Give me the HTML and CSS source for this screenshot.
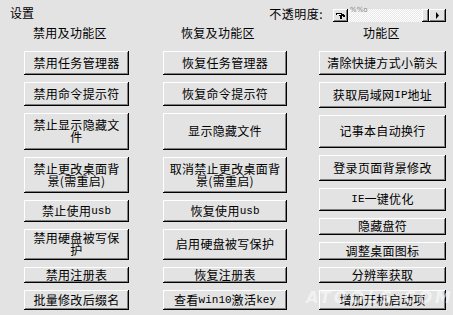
FILE: index.html
```html
<!DOCTYPE html>
<html lang="zh-CN">
<head>
<meta charset="utf-8">
<title>设置</title>
<link rel="stylesheet" href="styles.css">
</head>
<body>
<div class="window">
  <div class="top">
    <div class="title">设置</div>
    <div class="opacity">
      <span class="op-label">不透明度:</span>
      <div class="scrollbar">
        <div class="sb-btn sb-left">
          <svg width="11" height="9" viewBox="0 0 11 9"><path d="M1 2h6v1h2v1h1v2h-2v-1h-1v3h-2v-3h-1v-1h-3z" fill="#000"/><path d="M2 3h4v1h-4z" fill="#fff"/></svg>
        </div>
        <div class="sb-track"><span class="sb-noise">%%o</span></div>
        <div class="sb-thumb"></div>
        <div class="sb-btn sb-right">
          <svg width="5" height="7" viewBox="0 0 5 7"><path d="M1 0l3 3.5l-3 3.5z" fill="#000"/></svg>
        </div>
      </div>
    </div>
  </div>
  <div class="grid">
    <div class="head h1">禁用及功能区</div>
    <div class="head h2">恢复及功能区</div>
    <div class="head h3">功能区</div>

    <div class="col c1">
      <div class="btn">禁用任务管理器</div>
      <div class="btn">禁用命令提示符</div>
      <div class="btn">禁止显示隐藏文件</div>
      <div class="btn">禁止更改桌面背景(需重启)</div>
      <div class="btn">禁止使用<span class="mono">usb</span></div>
      <div class="btn">禁用硬盘被写保护</div>
      <div class="btn">禁用注册表</div>
      <div class="btn">批量修改后缀名</div>
    </div>
    <div class="col c2">
      <div class="btn">恢复任务管理器</div>
      <div class="btn">恢复命令提示符</div>
      <div class="btn">显示隐藏文件</div>
      <div class="btn">取消禁止更改桌面背景(需重启)</div>
      <div class="btn">恢复使用<span class="mono">usb</span></div>
      <div class="btn">启用硬盘被写保护</div>
      <div class="btn">恢复注册表</div>
      <div class="btn">查看<span class="mono">win10</span>激活<span class="mono">key</span></div>
    </div>
    <div class="col c3">
      <div class="btn">清除快捷方式小箭头</div>
      <div class="btn">获取局域网<span class="mono">IP</span>地址</div>
      <div class="btn">记事本自动换行</div>
      <div class="btn">登录页面背景修改</div>
      <div class="btn"><span class="mono">IE</span>一键优化</div>
      <div class="btn">隐藏盘符</div>
      <div class="btn">调整桌面图标</div>
      <div class="btn">分辨率获取</div>
      <div class="btn">增加开机启动项</div>
    </div>
  </div>
  <div class="watermark">ATOOLS.COM</div>
</div>
</body>
</html>
```
FILE: styles.css
```css
html, body {
  margin: 0;
  padding: 0;
}
body {
  background: #e3e3e3;
  font-family: "Noto Sans CJK SC", "DejaVu Sans", sans-serif;
  font-size: 12px;
  color: #000;
}
.window {
  position: relative;
  width: 453px;
  height: 315px;
  overflow: hidden;
}
.top {
  display: flex;
  justify-content: space-between;
  align-items: flex-start;
  height: 26px;
}
.title {
  margin: 5px 0 0 10px;
  line-height: 16px;
}
.opacity {
  display: flex;
  align-items: flex-start;
  margin: 7px 7px 0 0;
}
.op-label {
  line-height: 14px;
  margin-right: 10px;
  letter-spacing: 0.5px;
}
.scrollbar {
  display: flex;
  height: 13px;
  margin-top: 2px;
  width: 113px;
}
.sb-btn {
  width: 15px;
  height: 13px;
  box-sizing: border-box;
  background: #e3e3e3;
  box-shadow: inset -1px -1px #000, inset 1px 1px #fff, inset -2px -2px #808080;
  display: flex;
  align-items: center;
  justify-content: center;
}
.sb-right {
  width: 17px;
}
.sb-track {
  flex: 1;
  background-color: #f6f6f6;
  background-image: repeating-conic-gradient(#ffffff 0 25%, #e8e8e8 0 50%);
  background-size: 2px 2px;
  position: relative;
}
.sb-noise {
  position: absolute;
  left: 2px;
  top: -3px;
  font-family: "DejaVu Sans", sans-serif;
  font-size: 7px;
  color: #808080;
}
.sb-thumb {
  width: 7px;
  height: 13px;
  background: #e3e3e3;
  box-shadow: inset -1px -1px #000, inset 1px 1px #fff, inset -2px -2px #808080;
}
.grid {
  display: grid;
  grid-template-columns: 105px 125px 126px;
  padding-left: 24px;
  column-gap: 33px;
}
.head {
  line-height: 14px;
  height: 25px;
  letter-spacing: 0.3px;
}
.h1 { padding-left: 9px; }
.h2 { padding-left: 19px; }
.h3 { padding-left: 43px; }
.col {
  display: grid;
  row-gap: 7px;
}
.c1, .c2 {
  grid-template-rows: 24px 24px 37px 36px 22px 31px 16px 20px;
}
.c2 {
  margin-left: 1px;
}
.c3 {
  grid-template-rows: 24px 26px 33px 26px 23px 17px 18px 16px 20px;
  margin-left: -1px;
}
.btn {
  box-sizing: border-box;
  background: #e3e3e3;
  box-shadow: inset -1px -1px #000, inset 1px 1px #fff, inset -2px -2px #808080;
  display: flex;
  align-items: center;
  justify-content: center;
  text-align: center;
  padding: 0 5px 1px 5px;
  line-height: 12px;
  letter-spacing: 0.3px;
}
.mono {
  font-family: "Liberation Mono", "DejaVu Sans Mono", monospace;
  font-size: 11px;
  letter-spacing: 0;
}
.watermark {
  position: absolute;
  left: 306px;
  top: 288px;
  font-family: "DejaVu Sans", sans-serif;
  font-weight: bold;
  font-style: italic;
  font-size: 16px;
  letter-spacing: 3px;
  color: rgba(255, 255, 255, 0.55);
  pointer-events: none;
}
```
